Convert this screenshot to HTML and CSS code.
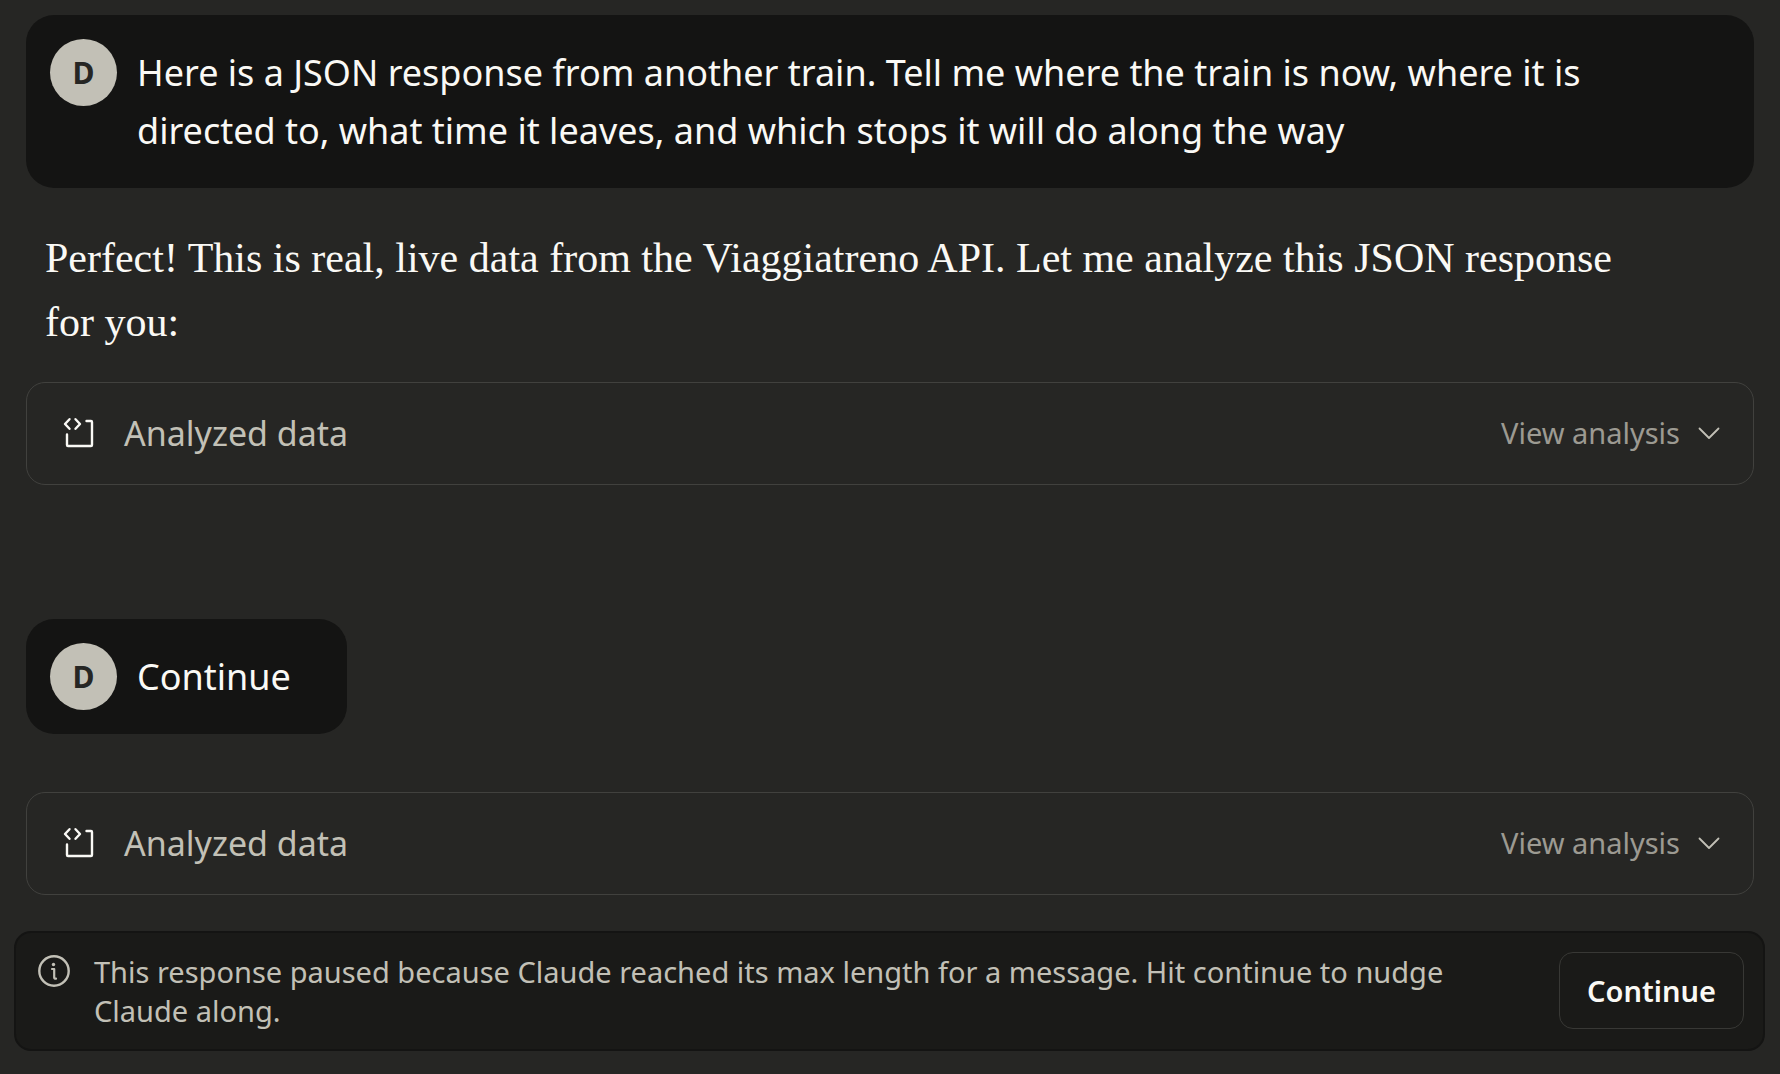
FILE: index.html
```html
<!DOCTYPE html>
<html lang="en">
<head>
<meta charset="utf-8">
<meta name="viewport" content="width=device-width, initial-scale=1">
<title>Train data chat</title>
<link rel="stylesheet" href="styles.css">
</head>
<body>
<main class="chat">
  <section class="thread">
    <article class="bubble">
      <span class="avatar">D</span>
      <p class="bubble-text">Here is a JSON response from another train. Tell me where the train is now, where it is directed to, what time it leaves, and which stops it will do along the way</p>
    </article>
    <p class="reply">Perfect! This is real, live data from the Viaggiatreno API. Let me analyze this JSON response for you:</p>
    <button class="analysis" type="button">
      <svg class="analysis-icon" viewBox="0 0 32 32" aria-hidden="true"><path d="M6.500 2.200 2 7l4.500 4.800M12.500 2.200 17 7l-4.500 4.800M23.500 4h4.500q1 0 1 1v23q0 1-1 1H5q-1 0-1-1V17.500"/></svg>
      <span class="analysis-label">Analyzed data</span>
      <span class="analysis-action">View analysis</span>
      <svg class="chevron" viewBox="0 0 24 24" aria-hidden="true"><path d="m2.500 7.500 9.500 9.500L21.500 7.500"/></svg>
    </button>
    <article class="bubble bubble-next">
      <span class="avatar">D</span>
      <p class="bubble-text">Continue</p>
    </article>
    <button class="analysis analysis-next" type="button">
      <svg class="analysis-icon" viewBox="0 0 32 32" aria-hidden="true"><path d="M6.500 2.200 2 7l4.500 4.800M12.500 2.200 17 7l-4.500 4.800M23.500 4h4.500q1 0 1 1v23q0 1-1 1H5q-1 0-1-1V17.500"/></svg>
      <span class="analysis-label">Analyzed data</span>
      <span class="analysis-action">View analysis</span>
      <svg class="chevron" viewBox="0 0 24 24" aria-hidden="true"><path d="m2.500 7.500 9.500 9.500L21.500 7.500"/></svg>
    </button>
  </section>
  <aside class="notice">
    <svg class="info-icon" viewBox="0 0 32 32" aria-hidden="true"><circle class="info-ring" cx="16" cy="16" r="14.700"/><circle class="info-dot" cx="15.500" cy="9.500" r="1.700"/><path class="info-stem" d="M14 14h2.200v8.500q0 1.200 1.800 1.200"/></svg>
    <p class="notice-text">This response paused because Claude reached its max length for a message. Hit continue to nudge Claude along.</p>
    <button class="continue" type="button">Continue</button>
  </aside>
</main>
</body>
</html>
```
FILE: styles.css
```css
* {
  box-sizing: border-box;
}

body {
  margin: 0;
  background: #262624;
  color: #faf9f5;
  font-family: "Noto Sans", "Liberation Sans", sans-serif;
}

p {
  margin: 0;
}

button {
  font-family: inherit;
  cursor: pointer;
}

svg {
  flex: none;
  fill: none;
  stroke: currentColor;
  stroke-linecap: round;
  stroke-linejoin: round;
}

.chat {
  padding: 15px 15px 24px 14px;
}

.thread {
  display: flex;
  flex-direction: column;
  align-items: flex-start;
  padding: 0 11px 0 12px;
}

.bubble {
  display: flex;
  gap: 20px;
  padding: 24px 56px 24px 24px;
  border-radius: 28px;
  background: #141413;
}

.bubble-next {
  margin-top: 134px;
}

.avatar {
  flex: none;
  display: grid;
  place-items: center;
  width: 67px;
  height: 67px;
  border-radius: 50%;
  background: #c2c0b6;
  color: #262624;
  font-size: 30px;
  font-weight: 700;
}

.bubble-text {
  padding: 5px 0 4px;
  font-size: 36px;
  line-height: 58px;
}

.reply {
  margin-top: 38px;
  padding: 0 100px 0 19px;
  font-family: "Liberation Serif", serif;
  font-size: 42px;
  line-height: 64px;
}

.analysis {
  display: flex;
  align-items: center;
  width: 100%;
  height: 103px;
  margin-top: 28px;
  padding: 0 32px 2px 36px;
  border: 1px solid #41413e;
  border-radius: 19px;
  background: transparent;
  color: #c2c0b6;
}

.analysis-next {
  margin-top: 58px;
}

.analysis-icon {
  width: 32px;
  height: 32px;
  color: #faf9f5;
  stroke-width: 2.4;
}

.analysis-label {
  margin-left: 29px;
  font-size: 34px;
}

.analysis-action {
  margin-left: auto;
  color: #9c9a92;
  font-size: 29px;
}

.chevron {
  width: 24px;
  height: 24px;
  margin-left: 17px;
  stroke-width: 1.8;
}

.notice {
  display: flex;
  align-items: flex-start;
  margin-top: 36px;
  padding: 19px;
  border: 2px solid #141413;
  border-radius: 17px;
  background: #1a1a18;
  color: #c2c0b6;
}

.info-icon {
  width: 32px;
  height: 32px;
  margin: 3px 24px 0 3px;
}

.info-ring {
  stroke-width: 2.4;
}

.info-dot {
  fill: currentColor;
  stroke: none;
}

.info-stem {
  stroke-width: 2.2;
}

.notice-text {
  flex: 1;
  font-size: 29px;
  line-height: 39px;
}

.continue {
  flex: none;
  width: 185px;
  height: 77px;
  margin-left: 72px;
  border: 1px solid #383835;
  border-radius: 14px;
  background: transparent;
  color: #faf9f5;
  font-size: 29px;
  font-weight: 600;
}
```
